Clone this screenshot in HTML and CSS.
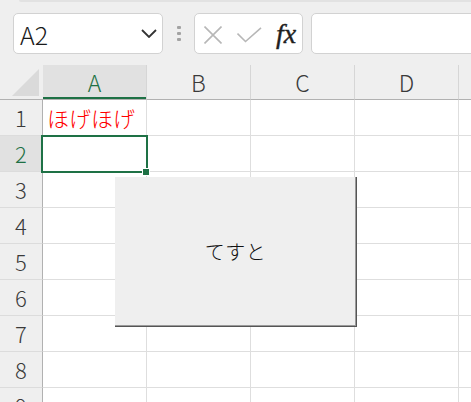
FILE: index.html
```html
<!DOCTYPE html>
<html lang="ja">
<head>
<meta charset="utf-8">
<title>Sheet</title>
<link rel="stylesheet" href="styles.css">
</head>
<body>
<div class="app">
  <div class="topline"></div>
  <div class="formula-bar">
    <div class="name-box">
      <span class="name">A2</span>
      <svg class="chevron" width="16" height="9" viewBox="0 0 16 9"><polyline points="1,1 8,8 15,1" fill="none" stroke="#333" stroke-width="1.8"/></svg>
    </div>
    <div class="grip"><i></i><i></i><i></i></div>
    <div class="fx-box">
      <svg class="icon-x" width="18" height="18" viewBox="0 0 18 18"><path d="M0.5 0.5 L17.5 17.5 M17.5 0.5 L0.5 17.5" stroke="#b7b7b7" stroke-width="1.6" fill="none"/></svg>
      <svg class="icon-check" width="25" height="16" viewBox="0 0 25 16"><polyline points="0.5,6.5 8.5,14.5 24,0.8" fill="none" stroke="#b7b7b7" stroke-width="1.6"/></svg>
      <span class="fx">fx</span>
    </div>
    <div class="formula-input"></div>
  </div>
  <div class="sheet">
    <div class="grid">
      <div class="corner"><span class="tri"></span></div>
      <div class="ch sel">A</div>
      <div class="ch">B</div>
      <div class="ch">C</div>
      <div class="ch">D</div>
      <div class="ch"></div>

      <div class="rh">1</div>
      <div class="cell red">ほげほげ</div>
      <div class="cell"></div><div class="cell"></div><div class="cell"></div><div class="cell"></div>

      <div class="rh sel">2</div>
      <div class="cell"></div><div class="cell"></div><div class="cell"></div><div class="cell"></div><div class="cell"></div>

      <div class="rh">3</div>
      <div class="cell"></div><div class="cell"></div><div class="cell"></div><div class="cell"></div><div class="cell"></div>

      <div class="rh">4</div>
      <div class="cell"></div><div class="cell"></div><div class="cell"></div><div class="cell"></div><div class="cell"></div>

      <div class="rh">5</div>
      <div class="cell"></div><div class="cell"></div><div class="cell"></div><div class="cell"></div><div class="cell"></div>

      <div class="rh">6</div>
      <div class="cell"></div><div class="cell"></div><div class="cell"></div><div class="cell"></div><div class="cell"></div>

      <div class="rh">7</div>
      <div class="cell"></div><div class="cell"></div><div class="cell"></div><div class="cell"></div><div class="cell"></div>

      <div class="rh">8</div>
      <div class="cell"></div><div class="cell"></div><div class="cell"></div><div class="cell"></div><div class="cell"></div>

      <div class="rh">9</div>
      <div class="cell"></div><div class="cell"></div><div class="cell"></div><div class="cell"></div><div class="cell"></div>
    </div>
    <div class="selection"><span class="handle"></span></div>
    <button class="form-button" type="button">てすと</button>
  </div>
</div>
</body>
</html>
```
FILE: styles.css
```css
* { box-sizing: border-box; }

html, body {
  margin: 0;
  padding: 0;
}

body {
  width: 471px;
  height: 402px;
  overflow: hidden;
  background: #efefef;
  font-family: "Noto Sans CJK JP", "Noto Sans", sans-serif;
  font-weight: 300;
  color: #222;
}

.app {
  width: 471px;
  height: 402px;
  overflow: hidden;
}

.topline {
  height: 2px;
  margin-left: 19px;
  background: #e2e2e2;
  border-bottom-left-radius: 2px;
}

.formula-bar {
  height: 63px;
  display: flex;
  align-items: center;
  padding-left: 13px;
}

.name-box {
  width: 150px;
  height: 41px;
  background: #fff;
  border: 1px solid #d2d2d2;
  border-radius: 5px;
  display: flex;
  align-items: center;
  justify-content: space-between;
  padding: 0 5px 0 6px;
}

.name {
  font-size: 25px;
  line-height: 1;
  color: #1a1a1a;
  position: relative;
  top: 1px;
}

.chevron { display: block; }

.grip {
  width: 4px;
  margin: 0 13px 0 14px;
  display: flex;
  flex-direction: column;
  gap: 3px;
}

.grip i {
  display: block;
  width: 4px;
  height: 3px;
  background: #a3a3a3;
  border-radius: 1px;
}

.fx-box {
  width: 109px;
  height: 41px;
  background: #fff;
  border: 1px solid #d2d2d2;
  border-radius: 5px;
  display: flex;
  align-items: center;
  padding-left: 9px;
}

.icon-x { display: block; margin-top: 3px; }

.icon-check { display: block; margin-left: 15px; margin-top: 2px; }

.fx {
  margin-left: 14px;
  font-family: "Liberation Serif", "DejaVu Serif", serif;
  font-style: italic;
  font-weight: 400;
  font-size: 28px;
  line-height: 1;
  color: #1f1f1f;
  -webkit-text-stroke: 0.4px #1f1f1f;
}

.formula-input {
  flex: 1;
  height: 41px;
  margin-left: 8px;
  margin-right: -10px;
  background: #fff;
  border: 1px solid #d2d2d2;
  border-radius: 5px;
}

.sheet {
  position: relative;
}

.grid {
  display: grid;
  grid-template-columns: 43px repeat(5, 104px);
  grid-template-rows: 35px repeat(9, 36px);
}

.corner {
  background: #efefef;
  border-bottom: 1px solid #b1b1b1;
  display: flex;
  align-items: flex-end;
  justify-content: flex-end;
  padding: 0 4px 3px 0;
}

.tri {
  width: 27px;
  height: 27px;
  background: #dadada;
  clip-path: polygon(100% 0, 100% 100%, 0 100%);
}

.ch {
  background: #efefef;
  border-right: 1px solid #d6d6d6;
  border-bottom: 1px solid #b1b1b1;
  font-size: 23px;
  line-height: 34px;
  text-align: center;
  color: #3a3a3a;
}

.ch.sel {
  background: #e1e1e1;
  color: #1e7145;
  box-shadow: inset 0 -2px 0 #1e7145;
}

.rh {
  background: #efefef;
  border-right: 1px solid #b1b1b1;
  border-bottom: 1px solid #dcdcdc;
  font-size: 22px;
  line-height: 35px;
  text-align: center;
  color: #3a3a3a;
}

.rh.sel {
  background: #e1e1e1;
  color: #1e7145;
}

.cell {
  background: #fff;
  border-right: 1px solid #dedede;
  border-bottom: 1px solid #dedede;
}

.cell.red {
  color: #ff0000;
  font-size: 22px;
  line-height: 35px;
  padding-left: 4px;
  white-space: nowrap;
}

.selection {
  position: absolute;
  left: 41px;
  top: 70px;
  width: 107px;
  height: 38px;
  border: 2px solid #1e7145;
}

.handle {
  position: absolute;
  left: 99px;
  top: 31px;
  width: 8px;
  height: 8px;
  background: #1e7145;
  border: 1px solid #fff;
}

.form-button {
  position: absolute;
  left: 115px;
  top: 112px;
  width: 242px;
  height: 150px;
  margin: 0;
  padding: 0;
  appearance: none;
  background: #efefef;
  border: 0;
  border-right: 1px solid #555;
  border-bottom: 1px solid #555;
  box-shadow: inset -1px -1px 0 #9a9a9a;
  font-family: "Noto Sans CJK JP", "Noto Sans", sans-serif;
  font-weight: 300;
  font-size: 20px;
  color: #111;
  letter-spacing: 0.5px;
}
```
